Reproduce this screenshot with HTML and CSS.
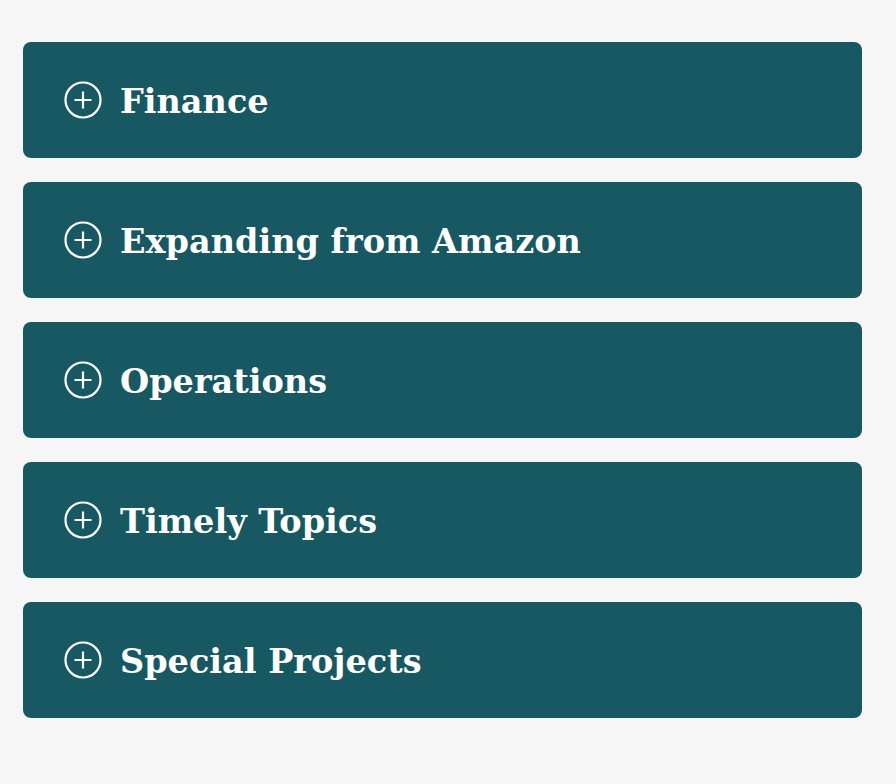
FILE: index.html
```html
<!DOCTYPE html>
<html>
<head>
<meta charset="utf-8">
<link rel="stylesheet" href="styles.css">
</head>
<body>
<div class="list">
  <div class="item"><svg class="icon" viewBox="0 0 38 38"><circle cx="19" cy="19" r="17.5"/><path d="M19 10.5v17M10.5 19h17"/></svg><span class="label">Finance</span></div>
  <div class="item"><svg class="icon" viewBox="0 0 38 38"><circle cx="19" cy="19" r="17.5"/><path d="M19 10.5v17M10.5 19h17"/></svg><span class="label">Expanding from Amazon</span></div>
  <div class="item"><svg class="icon" viewBox="0 0 38 38"><circle cx="19" cy="19" r="17.5"/><path d="M19 10.5v17M10.5 19h17"/></svg><span class="label">Operations</span></div>
  <div class="item"><svg class="icon" viewBox="0 0 38 38"><circle cx="19" cy="19" r="17.5"/><path d="M19 10.5v17M10.5 19h17"/></svg><span class="label">Timely Topics</span></div>
  <div class="item"><svg class="icon" viewBox="0 0 38 38"><circle cx="19" cy="19" r="17.5"/><path d="M19 10.5v17M10.5 19h17"/></svg><span class="label">Special Projects</span></div>
</div>
</body>
</html>
```

FILE: styles.css
```css
html, body {
  margin: 0;
  padding: 0;
  background: #f6f6f6;
}
.list {
  display: flex;
  flex-direction: column;
  gap: 24px;
  padding: 42px 0 0 23px;
  width: 839px;
}
.item {
  height: 116px;
  box-sizing: border-box;
  background: #185862;
  border-radius: 8px;
  display: flex;
  align-items: center;
  padding-left: 41px;
  gap: 18px;
}
.icon {
  width: 38px;
  height: 38px;
  flex: none;
  fill: none;
  stroke: #ffffff;
  stroke-width: 2.2;
}
.label {
  font-family: "DejaVu Serif", serif;
  font-weight: bold;
  font-size: 33.5px;
  color: #ffffff;
  line-height: 1;
  padding-top: 4px;
}
```
